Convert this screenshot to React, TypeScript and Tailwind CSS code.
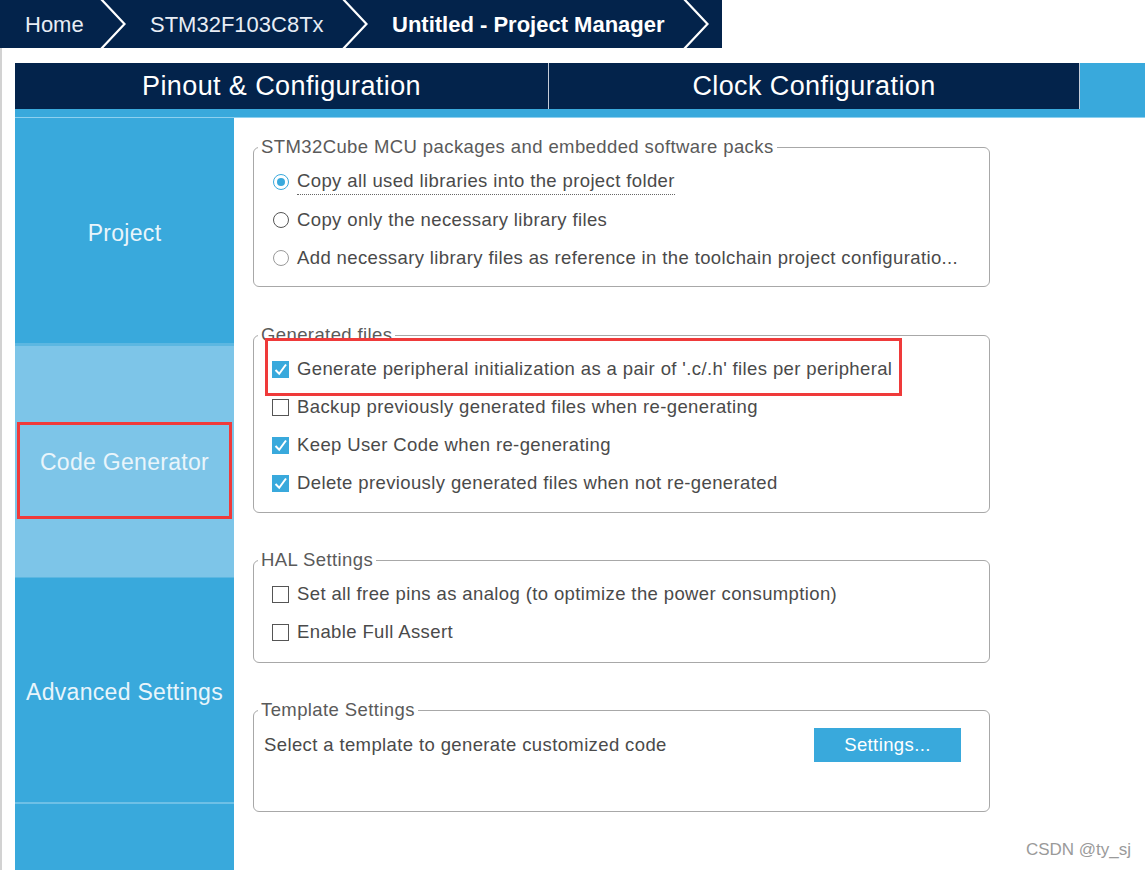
import React from "react";

function Chevron() {
  return (
    <svg width="26" height="48" viewBox="0 0 26 48" className="block shrink-0">
      <polyline points="1,-1 24.5,24 1,49" fill="none" stroke="white" strokeWidth="2.2" />
    </svg>
  );
}

function CheckBox({ checked }: { checked: boolean }) {
  if (checked) {
    return (
      <span className="flex h-[17px] w-[17px] shrink-0 items-center justify-center bg-[#39a9dc]">
        <svg width="17" height="17" viewBox="0 0 17 17" className="block">
          <polyline points="3.5,9 7.2,12.8 14,3.5" fill="none" stroke="white" strokeWidth="2" />
        </svg>
      </span>
    );
  }
  return <span className="block h-[17px] w-[17px] shrink-0 border border-[#555] bg-white" />;
}

function Radio({ selected, faded }: { selected?: boolean; faded?: boolean }) {
  return (
    <span className="flex h-[17px] w-[17px] shrink-0 items-center justify-center">
      {selected ? (
        <span className="flex h-[16px] w-[16px] items-center justify-center rounded-full border-[1.5px] border-[#39a9dc] bg-white">
          <span className="block h-[8px] w-[8px] rounded-full bg-[#39a9dc]" />
        </span>
      ) : (
        <span
          className={
            faded
              ? "block h-[16px] w-[16px] rounded-full border border-[#9a9a9a] bg-white"
              : "block h-[16px] w-[16px] rounded-full border border-[#555] bg-white"
          }
        />
      )}
    </span>
  );
}

function Row({ children, control }: { children: React.ReactNode; control: React.ReactNode }) {
  return (
    <div className="flex h-[38px] items-center gap-[8px] pl-[18px]">
      {control}
      <span className="whitespace-nowrap text-[18.5px] leading-[22px] tracking-[0.38px] text-[#4a4a4a]">{children}</span>
    </div>
  );
}

function Legend({ children }: { children: React.ReactNode }) {
  return (
    <span className="absolute left-[4px] top-[-12px] whitespace-nowrap bg-white px-[3px] text-[18.5px] leading-[22px] tracking-[0.4px] text-[#5a5a5a]">
      {children}
    </span>
  );
}

export default function App() {
  return (
    <div className="relative h-[870px] w-[1145px] overflow-hidden bg-white font-['Liberation_Sans',Arial,sans-serif]">
      {/* breadcrumb */}
      <div className="flex h-[48px]">
        <div className="flex h-full w-[722px] items-stretch bg-[#03234b] text-[22px] text-white">
          <div className="flex w-[100px] items-center pl-[25px] text-[#e8edf5]">Home</div>
          <Chevron />
          <div className="flex w-[216px] items-center pl-[24px] text-[#e8edf5]">STM32F103C8Tx</div>
          <Chevron />
          <div className="flex w-[315px] items-center whitespace-nowrap pl-[24px] font-bold">Untitled - Project Manager</div>
          <Chevron />
        </div>
      </div>

      <div className="flex h-[822px]">
        <div className="w-[2px] bg-[#d2d2d2]" />
        <div className="w-[13px]" />
        <div className="flex flex-1 flex-col pt-[15px]">
          {/* tabs */}
          <div className="flex h-[46px]">
            <div className="flex w-[533px] items-center justify-center bg-[#03234b] text-[27px] tracking-[0.4px] text-white">
              Pinout &amp; Configuration
            </div>
            <div className="w-[1px] bg-[#c5ccd8]" />
            <div className="flex w-[531px] items-center justify-center border-r border-[#c5ccd8] bg-[#03234b] text-[27px] tracking-[0.4px] text-white">
              Clock Configuration
            </div>
            <div className="flex-1 bg-[#39a9dc]" />
          </div>
          <div className="h-[8px] bg-[#39a9dc]" />
          <div className="h-[1px] bg-[#8ed0ef]" />

          <div className="flex flex-1">
            {/* sidebar */}
            <div className="flex w-[219px] flex-col text-[23px] tracking-[0.3px] text-[#e9f5fb]">
              <div className="flex h-[225px] items-center justify-center bg-[#39a9dc] pt-[5px]">Project</div>
              <div className="h-[3px] bg-[#5cb7e1]" />
              <div className="relative flex h-[231px] items-center justify-center bg-[#7dc5e8] pt-[2px]">
                Code Generator
                <div className="absolute left-[2px] top-[76px] h-[97px] w-[215px] border-[3px] border-[#ef3a3a]" />
              </div>
              <div className="h-[1px] bg-[#5cb7e1]" />
              <div className="flex h-[224px] items-center justify-center bg-[#39a9dc] pt-[4px]">Advanced Settings</div>
              <div className="h-[2px] bg-[#6ec0e6]" />
              <div className="flex-1 bg-[#39a9dc]" />
            </div>
            <div className="w-[1px] bg-white" />

            {/* content */}
            <div className="flex flex-1 flex-col pl-[18px]">
              <div className="relative mt-[29px] w-[737px] rounded-[6px] border border-[#a8a8a8] pb-[9px] pt-[15px]">
                <Legend>STM32Cube MCU packages and embedded software packs</Legend>
                <Row control={<Radio selected />}>
                  <span className="inline-block border-b border-dotted border-[#666] pb-[2px]">
                    Copy all used libraries into the project folder
                  </span>
                </Row>
                <Row control={<Radio />}>Copy only the necessary library files</Row>
                <Row control={<Radio faded />}>
                  Add necessary library files as reference in the toolchain project configuratio...
                </Row>
              </div>

              <div className="relative mt-[48px] w-[737px] rounded-[6px] border border-[#a8a8a8] pb-[10px] pt-[14px]">
                <Legend>Generated files</Legend>
                <div className="absolute left-[11px] top-[2px] h-[58px] w-[637px] border-[3px] border-[#ef3a3a]" />
                <Row control={<CheckBox checked />}>
                  Generate peripheral initialization as a pair of '.c/.h' files per peripheral
                </Row>
                <Row control={<CheckBox checked={false} />}>Backup previously generated files when re-generating</Row>
                <Row control={<CheckBox checked />}>Keep User Code when re-generating</Row>
                <Row control={<CheckBox checked />}>Delete previously generated files when not re-generated</Row>
              </div>

              <div className="relative mt-[47px] w-[737px] rounded-[6px] border border-[#a8a8a8] pb-[11px] pt-[14px]">
                <Legend>HAL Settings</Legend>
                <Row control={<CheckBox checked={false} />}>
                  Set all free pins as analog (to optimize the power consumption)
                </Row>
                <Row control={<CheckBox checked={false} />}>Enable Full Assert</Row>
              </div>

              <div className="relative mt-[47px] w-[737px] rounded-[6px] border border-[#a8a8a8] pb-[49px] pt-[17px]">
                <Legend>Template Settings</Legend>
                <div className="flex items-center justify-between pl-[10px] pr-[28px]">
                  <span className="whitespace-nowrap text-[18.5px] leading-[22px] tracking-[0.38px] text-[#4a4a4a]">
                    Select a template to generate customized code
                  </span>
                  <div className="flex h-[34px] w-[147px] items-center justify-center bg-[#39a9dc] text-[18.5px] tracking-[0.4px] text-white">
                    Settings...
                  </div>
                </div>
              </div>
            </div>
          </div>
        </div>
      </div>

      <div className="absolute bottom-[10px] right-[14px] text-[17px] leading-[20px] text-[#9a9a9a]">CSDN @ty_sj</div>
    </div>
  );
}
